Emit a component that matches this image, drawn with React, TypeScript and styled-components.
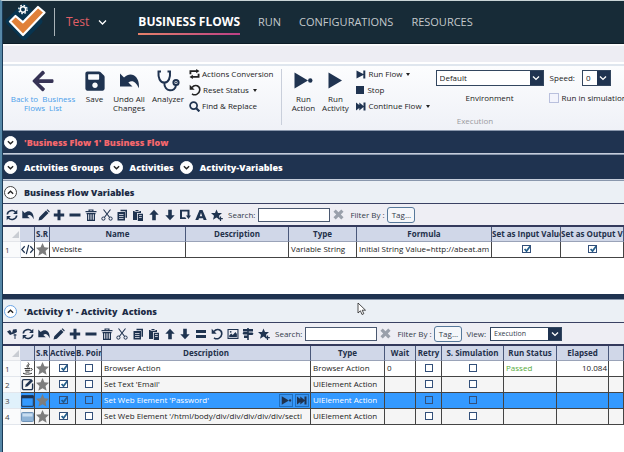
import React, { ReactNode } from "react";
import styled, { createGlobalStyle } from "styled-components";
import { FaArrowLeft, FaSave } from "react-icons/fa";

const navy = "#1f3350";
const check = (stroke: string) =>
  `url("data:image/svg+xml,%3Csvg xmlns='http://www.w3.org/2000/svg' viewBox='0 0 10 10'%3E%3Cpath d='M2 5l2.4 2.6L9.4 1' fill='none' stroke='${stroke}' stroke-width='2.2'/%3E%3C/svg%3E")`;

const Global = createGlobalStyle`
  * { box-sizing: border-box; }
  body {
    margin: 0;
    overflow: hidden;
    background: #fff;
    color: #222;
    font: 8px/10px "Open Sans", "Noto Sans", sans-serif;
  }
  button, input, select { font: inherit; color: inherit; margin: 0; padding: 0; }
  svg { display: block; flex: none; }
`;

const Window = styled.div`
  min-height: 100vh;
  border-left: 2px solid #5688a8;
  border-top: 1px solid #c9d4d6;
  overflow: hidden;
`;
const Inner = styled.div`
  min-height: 100vh;
  border-left: 1px solid #1b3a56;
`;

/* Header */
const Header = styled.header`
  display: flex;
  align-items: center;
  height: 43px;
  padding-left: 2px;
  background: #172b37;
  border-bottom: 1px solid #0c1c26;
`;
const Divider = styled.span`
  width: 1px;
  height: 28px;
  margin: 0 11px 0 8px;
  background: #a9b3b8;
`;
const Solution = styled.button`
  display: flex;
  align-items: center;
  gap: 9px;
  border: 0;
  background: none;
  color: #e05f66;
  font-size: 12px;
`;
const Nav = styled.nav`
  display: flex;
  gap: 18px;
  margin-left: 31px;
`;
const NavLink = styled.a<{ $active?: boolean }>`
  padding: 5px 0 4px;
  font-size: ${(p) => (p.$active ? 12 : 11)}px;
  line-height: 14px;
  text-decoration: none;
  white-space: nowrap;
  color: ${(p) => (p.$active ? "#fff" : "#c3c9cc")};
  font-weight: ${(p) => (p.$active ? 700 : 400)};
  border-bottom: 2px solid transparent;
  border-image: ${(p) => (p.$active ? "linear-gradient(90deg, #e5826a, #bb3f86) 1" : "none")};
`;

/* Ribbon */
const Band = styled.div`
  height: 17px;
  margin-top: 1px;
  background: #ededf3;
  border-top: 1px solid #f8f8fa;
`;
const Ribbon = styled.section`
  display: flex;
  height: 66px;
  margin-top: 2px;
  padding: 3px 0 0 4px;
  overflow: hidden;
  border-top: 2px solid #dfe6ee;
  background: linear-gradient(#fcfdfe, #eff1f7);
`;
const BigButton = styled.button<{ $w: number; $link?: boolean }>`
  display: flex;
  flex-direction: column;
  align-items: center;
  flex: none;
  width: ${(p) => p.$w}px;
  height: 46px;
  border: 0;
  background: none;
  color: ${(p) => (p.$link ? "#4ba0ea" : "#222")};
  line-height: 9px;
  white-space: pre;
`;
const BigIcon = styled.span`
  display: flex;
  align-items: center;
  height: 23px;
  margin-bottom: 2px;
  color: ${navy};
`;
const Commands = styled.div<{ $indent: number }>`
  display: flex;
  flex-direction: column;
  gap: 6px;
  flex: none;
  margin-left: ${(p) => p.$indent}px;
`;
const Command = styled.button<{ $gap?: number }>`
  display: flex;
  align-items: center;
  gap: ${(p) => p.$gap ?? 2}px;
  height: 10px;
  border: 0;
  background: none;
  white-space: nowrap;
`;
const Caret = styled.span`
  margin-left: 2px;
  border: 2px solid transparent;
  border-top: 3px solid #222;
  border-bottom: 0;
`;
const Group = styled.div`
  display: flex;
  flex-direction: column;
  justify-content: space-between;
  flex: none;
  width: 386px;
  height: 56px;
  margin-left: 8px;
  border-left: 1px solid #c9cfdb;
`;
const GroupBody = styled.div`
  display: flex;
  padding-left: 5px;
`;
const GroupCaption = styled.div`
  color: #9a9aa0;
  text-align: center;
  line-height: 9px;
`;
const Field = styled.label`
  display: flex;
  flex-direction: column;
  align-items: center;
  gap: 7px;
  margin: 1px 0 0 6px;
`;
const Side = styled.div`
  display: flex;
  flex-direction: column;
  gap: 7px;
  margin: 1px 0 0 5px;
`;
const Inline = styled.label<{ $gap: number; $indent?: number }>`
  display: flex;
  align-items: center;
  gap: ${(p) => p.$gap}px;
  margin-left: ${(p) => p.$indent ?? 0}px;
  white-space: nowrap;
`;
const SelectBox = styled.span<{ $w: number; $h: number }>`
  display: grid;
  width: ${(p) => p.$w}px;
  height: ${(p) => p.$h}px;
  border: 1px solid #33465f;
  background: #fff;
  > * { grid-area: 1 / 1; }
`;
const NativeSelect = styled.select<{ $small?: boolean }>`
  appearance: none;
  width: 100%;
  padding-left: 3px;
  border: 0;
  background: transparent;
  font-size: ${(p) => (p.$small ? 7 : 8)}px;
`;
const SelectArrow = styled.span`
  display: flex;
  align-items: center;
  justify-content: center;
  justify-self: end;
  width: 13px;
  background: ${navy};
  pointer-events: none;
`;

/* Expander headers */
const Bar = styled.div<{ $light?: boolean; $h?: number }>`
  display: flex;
  align-items: center;
  height: ${(p) => p.$h ?? 24}px;
  padding-left: 1px;
  border-top: 1px solid #8997ac;
  border-bottom: 1px solid ${(p) => (p.$light ? "#3a4163" : "#c5cddb")};
  background: ${(p) => (p.$light ? "#ebf0f5" : navy)};
  color: ${(p) => (p.$light ? "#1d2c45" : "#fff")};
`;
const Expander = styled.button<{ $ring?: string; $tone?: string }>`
  display: flex;
  align-items: center;
  gap: 7px;
  margin-right: 6px;
  border: 0;
  background: none;
  color: ${(p) => p.$tone ?? "inherit"};
  font-size: 9px;
  line-height: 13px;
  font-weight: 800;
  white-space: pre;
  > span {
    display: flex;
    align-items: center;
    justify-content: center;
    width: 13px;
    height: 13px;
    border: 1px solid ${(p) => p.$ring ?? "#fff"};
    border-radius: 50%;
    background: #fff;
    color: #222;
  }
`;

/* Grids */
const Toolbar = styled.div`
  display: flex;
  align-items: center;
  height: 23px;
  padding-left: 3px;
  background: #eeeef4;
  border-bottom: 2px solid #343a5c;
  color: #333b4a;
`;
const Tools = styled.div<{ $w: number }>`
  display: flex;
  justify-content: space-between;
  flex: none;
  width: ${(p) => p.$w}px;
  margin-right: 5px;
`;
const Tool = styled.button`
  border: 0;
  background: none;
  color: ${navy};
  svg { width: 12px; height: 12px; }
`;
const SearchInput = styled.input`
  width: 72px;
  height: 14px;
  border: 1px solid #4a5870;
  background: #fff;
`;
const ClearButton = styled.button`
  margin: 0 6px 0 3px;
  border: 0;
  background: none;
`;
const FilterText = styled.span`
  width: 37px;
  white-space: nowrap;
`;
const TagButton = styled.button`
  width: 28px;
  height: 16px;
  margin-right: 4px;
  border: 1px solid #56789a;
  border-radius: 3px;
  background: #f5f7fa;
`;
const Table = styled.table`
  width: 100%;
  table-layout: fixed;
  border-collapse: separate;
  border-spacing: 0;
`;
const Th = styled.th<{ $left?: boolean; $corner?: boolean }>`
  height: 15px;
  padding: 0;
  overflow: hidden;
  white-space: nowrap;
  font-weight: 700;
  color: #23304a;
  text-align: ${(p) => (p.$left ? "left" : "center")};
  background: ${(p) => (p.$corner ? "#f4f5f7" : "#d0d7e8")};
  border-right: 1px solid ${(p) => (p.$corner ? "#d0d7e8" : "#4a587a")};
  border-bottom: 1px solid ${(p) => (p.$corner ? "#e4e6ea" : "#9aa3b8")};
  svg { margin-left: auto; }
`;
const Td = styled.td<{ $align?: string; $tone?: string; $icon?: boolean }>`
  height: 16px;
  padding: ${(p) => (p.$icon ? "0" : "0 1px 1px 2px")};
  overflow: hidden;
  white-space: nowrap;
  vertical-align: middle;
  text-align: ${(p) => p.$align ?? "left"};
  color: ${(p) => p.$tone ?? "inherit"};
  border-right: 1px solid #444;
  border-bottom: 1px solid #444;
  svg { margin: 0 auto; }
`;
const RowHead = styled.th`
  padding: 0 0 0 2px;
  text-align: left;
  font-weight: 400;
  color: #444;
  background: #fafbfc;
  border-right: 1px solid #dce3ee;
  border-bottom: 1px solid #e2e6ec;
`;
const Row = styled.tr<{ $alt?: boolean; $selected?: boolean }>`
  background: ${(p) => (p.$selected ? "#3399ff" : p.$alt ? "#f5f5f5" : "#fff")};
  color: ${(p) => (p.$selected ? "#fff" : "#222")};
  ${RowHead} { background: ${(p) => (p.$selected ? "#e0f1fb" : "#fafbfc")}; }
`;
const Check = styled.input<{ $faint?: boolean; $dim?: boolean }>`
  appearance: none;
  display: block;
  flex: none;
  width: ${(p) => (p.$faint ? 10 : 8)}px;
  height: ${(p) => (p.$faint ? 10 : 8)}px;
  margin: 0 auto;
  border: 1px solid ${(p) => (p.$faint ? "#b9c0dd" : "#33507a")};
  background: ${(p) => (p.$faint ? "#f3f4fc" : p.$dim ? "transparent" : "#fff")};
  &:checked {
    background-image: ${(p) => (p.$dim ? check("%231d5c94") : check("%23245f8c"))};
    background-size: 10px 8px;
    background-origin: border-box;
    background-clip: border-box;
    background-repeat: no-repeat;
    width: 9px;
  }
`;
const DescCell = styled.div`
  display: flex;
  align-items: center;
  gap: 2px;
  > span { flex: 1; }
`;
const MiniButton = styled.button`
  width: 14px;
  height: 13px;
  border: 1px solid #1f6fc0;
  background: #3a93ee;
  color: ${navy};
`;
const Gap = styled.div`
  height: 36px;
`;
const Splitter = styled.div`
  height: 5px;
  background: ${navy};
`;
const Pointer = styled.svg`
  position: absolute;
  left: 357px;
  top: 302px;
`;

/* Icons */
const Svg = ({ children, w = 12, h = 12, vb = "0 0 12 12" }: { children: ReactNode; w?: number; h?: number; vb?: string }) => (
  <svg width={w} height={h} viewBox={vb} fill="currentColor" aria-hidden="true">{children}</svg>
);
const Chevron = ({ up, w = 7 }: { up?: boolean; w?: number }) => (
  <svg width={w} height={w} viewBox="0 0 8 8" fill="none" stroke="currentColor" strokeWidth="1.6" aria-hidden="true">
    <path d={up ? "M1 5.4 4 2.6l3 2.8" : "M1 2.6 4 5.4l3-2.8"} />
  </svg>
);
const undoPath = "M.3 1.500v7.800h7.500L5.300 6.900C7.500 5.300 9.700 6 11.600 10.300 12.400 3.200 7-.2 2.700 3.900z";
const icons: Record<string, ReactNode> = {
  pin: <Svg><path d="M1 3.500 4 2l2 3 1-3.500 3.500-.5L11 4 8.500 5.500 6 6.200 4 7z" /><path d="M9 6v5M7.500 7h3" stroke="currentColor" fill="none" /></Svg>,
  refresh: (
    <Svg>
      <path d="M1.300 5.500C1.700 1.500 7 .3 9.500 3M10.700 6.500C10.300 10.500 5 11.700 2.500 9" fill="none" stroke="currentColor" strokeWidth="1.600" />
      <path d="M11.300.7v4.200H7.100zM.7 11.300V7.100h4.200z" />
    </Svg>
  ),
  undo: <Svg><path d={undoPath} /></Svg>,
  edit: <Svg><path d="M.5 11.500l.8-3.300L8 1.500l2.500 2.500-6.700 6.700zM8.600.9l1-.7 2.200 2.200-.7 1z" /></Svg>,
  add: <Svg><path d="M4.500.8h3v3.700h3.700v3H7.500v3.700h-3V7.500H.8v-3h3.700z" /></Svg>,
  remove: <Svg><path d="M.5 4.500h11v3H.5z" /></Svg>,
  trash: <Svg><path d="M.5 2h3V.5h5V2h3v1.300H.5zM4.700 2h2.600v-.6H4.700zM1.500 4h9v1.200H10V12H2V5.200h-.5zM3.200 5.200v5.600h1V5.200zm2.300 0v5.600h1V5.200zm2.300 0v5.600h1V5.200z" fillRule="evenodd" /></Svg>,
  cut: (
    <Svg>
      <path d="M2.500.5 8.700 8.500M9.500.5 3.300 8.500" fill="none" stroke="currentColor" strokeWidth="1.100" />
      <circle cx="2.400" cy="9.600" r="1.600" fill="none" stroke="currentColor" /><circle cx="9.600" cy="9.600" r="1.600" fill="none" stroke="currentColor" />
    </Svg>
  ),
  copy: <Svg><path d="M4.500.8H11v8H9.500V2.300h-5z" /><path d="M1.500 3H9v8.500H1.500zM3 5v.8h4.500V5zm0 2v.8h4.500V7zm0 2v.8h4.500V9z" fillRule="evenodd" /></Svg>,
  paste: <Svg><path d="M1 2h2.500V1h3v1H9v2H5v7H1z" /><path d="M5.800 4.800H11V12H5.800zM7 6.300v.8h2.800v-.8zm0 2v.8h2.800v-.8z" fillRule="evenodd" /><path d="M2.500 2.500h5" stroke="#eeeef4" strokeWidth=".7" /></Svg>,
  up: <Svg><path d="M6 .8 10.700 5.700H7.800v5.500H4.200V5.700H1.300z" /></Svg>,
  down: <Svg><path d="M6 11.200 1.300 6.300h2.900V.8h3.600v5.500h2.900z" /></Svg>,
  copyTo: <Svg><path d="M1 .8h9.500v5.700H12L9.500 10 7 6.500h1.500V2.500H3v5.700h3.200l1.200 1.700H1z" /></Svg>,
  letter: <Svg><path d="M4.500 1h3L11.700 11H8.600L8 9.300H4L3.400 11H.3zM6 3.700 4.800 7.200h2.400z" fillRule="evenodd" /></Svg>,
  star: <Svg><path d="M5.500.5 7 4h4L8 6.700l1 4-3.500-2.200-3.500 2.200 1-4L0 4h4z" /><path d="M9.500 7.500v4.500M7.300 9.700h4.500" stroke="currentColor" strokeWidth="1.200" /></Svg>,
  equal: <Svg><path d="M1 2h10v3H1zM1 7h10v3H1z" /></Svg>,
  reset: <Svg><path d="M3 3.500C6-.3 11.300 2 10.700 6.300 10.200 10.300 6 12 3 9.800" fill="none" stroke="currentColor" strokeWidth="1.600" /><path d="M.7.700v5h5z" /></Svg>,
  image: <Svg><path d="M.5 1h11v10H.5zM1.600 2v8h8.800V2z" fillRule="evenodd" /><path d="M2.200 9.300V7.500l2-2 1.500 1.500L8.500 4l1.400 2v3.300z" /><circle cx="3.700" cy="3.800" r=".9" /></Svg>,
  signs: <Svg><path d="M5.200 0h1.600v1H11v2.500H6.800v1h3.700l1 1.200-1 1.300H6.800v5H5.200v-2H2V7.500h3.200v-1H1.500L.5 5.300 1.500 4h3.700v-.5H1V1h4.200z" /></Svg>,
};
const GreyStar = () => <Svg w={13} h={13}><path fill="#7d7d7d" d="M6 .1 7.800 4l4.200.4-3.200 2.900 1 4.400L6 9.400l-3.800 2.300 1-4.400L0 4.400 4.200 4z" /></Svg>;
const Corner = () => <svg width="9" height="9" viewBox="0 0 9 9"><path d="M8 1v7H1z" fill="#c9cdd3" /></svg>;
const Cross = () => <Svg w={11} h={11}><path d="M3 .5 6 3.500 9 .5 11.500 3l-3 3 3 3L9 11.500l-3-3-3 3L.5 9l3-3-3-3z" fill="#9aa0ab" /></Svg>;
const Repeat = () => (
  <Svg w={11} h={10}><path d="M0 6.200V1.500h8V0l4 2.500L8 5V3.500H2.200v2.700zM12 5.800v4.700H4V12L0 9.500 4 7v1.500h5.800V5.800z" /></Svg>
);
const Magnifier = () => (
  <svg width="11" height="11" viewBox="0 0 11 11" fill="none" stroke={navy}>
    <circle cx="4.600" cy="4.600" r="3.500" strokeWidth="1.700" /><path d="M7.200 7.200 10.400 10.400" strokeWidth="2.200" />
  </svg>
);
const Stethoscope = () => (
  <svg width="23" height="22" viewBox="0 0 23 22" fill="none" stroke={navy} strokeWidth="2">
    <path d="M4 1.500H1.500C1 8 3 12.500 7.300 12.500S13.500 8 13 1.500h-2.500M7.300 12.500C7 22.500 18.500 22.500 19 15" />
    <circle cx="19" cy="12.500" r="2.600" /><circle cx="19" cy="12.500" r=".6" strokeWidth="1" />
  </svg>
);

const typeIcons: Record<string, ReactNode> = {
  code: <svg width="13" height="11" viewBox="0 0 14 11" fill="none" stroke={navy} strokeWidth="1.300"><path d="M4 2 .8 5.500 4 9M10 2l3.200 3.500L10 9M8.300.5 5.700 10.500" /></svg>,
  java: <svg width="13" height="13" viewBox="0 0 13 13" fill="none" stroke="#333"><path d="M7 .5C9 2.500 4.500 3 6.500 5.500M8.500 2.500C6.500 3.500 7 4.500 8 5.500M3.500 6.500h6M4 8.300h5M4.500 10h4M10 6.500c2 0 1.500 2-.5 2.200M2 11.200c2 1.300 7 1.300 9 0" /></svg>,
  edit: <svg width="13" height="13" viewBox="0 0 14 14"><path d="M10.500 1.700H3A1.500 1.500 0 0 0 1.500 3.200V11A1.500 1.500 0 0 0 3 12.500h8a1.500 1.500 0 0 0 1.500-1.500V6" fill="none" stroke={navy} strokeWidth="1.500" /><path d="M4.500 9.700l.6-2.700L11 1.200l2 2L7.200 9z" fill={navy} /></svg>,
  browser: <svg width="13" height="12" viewBox="0 0 13 12" fill="none" stroke={navy}><path d="M.7.700h11.600v10.600H.7z" /><path d="M.5 2h12" strokeWidth="2.600" /></svg>,
  button: <svg width="13" height="10" viewBox="0 0 13 10"><rect x=".5" y=".5" width="12" height="9" rx="1" fill="#8fb3d6" stroke="#6f93b8" /><path d="M1.500 1.500h10v3h-10z" fill="#c9ddf0" /></svg>,
};
const Play = ({ dot }: { dot?: boolean }) => (
  <Svg w={dot ? 19 : 14} h={17} vb={dot ? "0 0 19 17" : "0 0 14 17"}>
    <path d="M.5.5 14 8.500.5 16.500z" />{dot && <circle cx="16.300" cy="8.500" r="2.200" />}
  </Svg>
);
const Next = ({ twice }: { twice?: boolean }) => (
  <svg width="10" height="9" viewBox="0 0 10 9" fill={navy} aria-hidden="true">
    <path d={twice ? "M0 .5 3.300 3V.5L7.500 4V.5h2v8h-2V5L3.300 8.500V6L0 8.500z" : "M.5.5 7.300 4V.5h2v8h-2V5L.5 8.500z"} />
  </svg>
);

const Logo = () => (
  <svg width="41" height="40" viewBox="0 0 41 40" aria-label="Ginger">
    <path d="M16.500 2.500Q19 .3 21.500 2.500L36.500 17.300Q38.500 19.500 36.500 21.700L21.500 37Q19 39.300 16.500 37L1.500 21.700Q-.5 19.500 1.500 17.300z" fill="#08344f" />
    <path d="M5 19.500 10.500 14 18 20.300 33 5 39.500 10.500 18 33z" fill="#e08038" stroke="#fff" strokeWidth="2.200" strokeLinejoin="round" />
    <circle cx="18" cy="7.500" r="2.700" fill="none" stroke="#fff" strokeWidth="1.500" />
    <circle cx="18" cy="7.500" r="4.200" fill="none" stroke="#fff" strokeWidth="1.300" strokeDasharray="1.600 1.700" />
  </svg>
);

const Select = ({ label, value, w, h, small }: { label: string; value: string; w: number; h: number; small?: boolean }) => (
  <SelectBox $w={w} $h={h}>
    <NativeSelect aria-label={label} $small={small} defaultValue={value}><option>{value}</option></NativeSelect>
    <SelectArrow><svg width="8" height="8" viewBox="0 0 8 8" fill="none" stroke="#fff" strokeWidth="1.400"><path d="M1 2.600 4 5.400l3-2.800" /></svg></SelectArrow>
  </SelectBox>
);

const GridToolbar = ({ tools, w, view }: { tools: string[]; w: number; view?: string }) => (
  <Toolbar>
    <Tools $w={w}>{tools.map((t) => <Tool key={t} aria-label={t}>{icons[t]}</Tool>)}</Tools>
    <Inline $gap={3}>Search:<SearchInput type="text" /></Inline>
    <ClearButton aria-label="Clear search"><Cross /></ClearButton>
    <FilterText>Filter By :</FilterText>
    <TagButton>Tag...</TagButton>
    {view && <Inline $gap={4}>View:<Select label="View" value={view} w={72} h={14} small /></Inline>}
  </Toolbar>
);

const Columns = ({ widths }: { widths: number[] }) => (
  <colgroup>{widths.map((w, i) => <col key={i} width={w} />)}<col /></colgroup>
);

const baseTools = ["refresh", "undo", "edit", "add", "remove", "trash", "cut", "copy", "paste", "up", "down"];

const actions = [
  { icon: "java", active: true, text: "Browser Action", type: "Browser Action", wait: "0", status: "Passed", elapsed: "10.084" },
  { icon: "edit", active: true, text: "Set Text 'Email'", type: "UIElement Action" },
  { icon: "browser", active: true, text: "Set Web Element 'Password'", type: "UIElement Action", selected: true },
  { icon: "button", active: true, text: "Set Web Element '/html/body/div/div/div/div/div/secti", type: "UIElement Action" },
];

export default function App() {
  return (
    <Window>
      <Global />
      <Inner>
        <Header>
          <Logo />
          <Divider />
          <Solution>Test<svg width="9" height="8" viewBox="0 0 8 8" fill="none" stroke="#fff" strokeWidth="1.300"><path d="M.5 2.500 4 6l3.500-3.500" /></svg></Solution>
          <Nav>
            <NavLink href="#flows" $active>BUSINESS FLOWS</NavLink>
            <NavLink href="#run">RUN</NavLink>
            <NavLink href="#config">CONFIGURATIONS</NavLink>
            <NavLink href="#resources">RESOURCES</NavLink>
          </Nav>
        </Header>
        <Band />
        <Ribbon>
          <BigButton $w={72} $link><BigIcon><FaArrowLeft size={24} color="#363355" /></BigIcon>{"Back to  Business\nFlows  List"}</BigButton>
          <BigButton $w={31}><BigIcon><FaSave size={22} /></BigIcon>Save</BigButton>
          <BigButton $w={38}><BigIcon><Svg w={23} h={20}><path d={undoPath} /></Svg></BigIcon>{"Undo All\nChanges"}</BigButton>
          <BigButton $w={40}><BigIcon><Stethoscope /></BigIcon>Analyzer</BigButton>
          <Commands $indent={1}>
            <Command><Repeat />Actions Conversion</Command>
            <Command>{icons.reset}Reset Status<Caret /></Command>
            <Command><Magnifier />Find &amp; Replace</Command>
          </Commands>
          <Group>
            <GroupBody>
              <BigButton $w={32}><BigIcon><Play dot /></BigIcon>{"Run\nAction"}</BigButton>
              <BigButton $w={32}><BigIcon><Play /></BigIcon>{"Run\nActivity"}</BigButton>
              <Commands $indent={5}>
                <Command><Next />Run Flow<Caret /></Command>
                <Command $gap={3}><Svg w={8} h={8}><path d="M0 0h12v12H0z" fill={navy} /></Svg>Stop</Command>
                <Command><Next twice />Continue Flow<Caret /></Command>
              </Commands>
              <Field><Select label="Environment" value="Default" w={108} h={16} />Environment</Field>
              <Side>
                <Inline $gap={7} $indent={1}>Speed:<Select label="Speed" value="0" w={29} h={16} /></Inline>
                <Inline $gap={3}><Check type="checkbox" $faint />Run in simulation mode</Inline>
              </Side>
            </GroupBody>
            <GroupCaption>Execution</GroupCaption>
          </Group>
        </Ribbon>

        <Bar><Expander $tone="#f4676c"><span><Chevron /></span>'Business Flow 1' Business Flow</Expander></Bar>
        <Bar $h={26}>
          <Expander><span><Chevron /></span>Activities Groups</Expander>
          <Expander><span><Chevron /></span>Activities</Expander>
          <Expander><span><Chevron /></span>Activity-Variables</Expander>
        </Bar>
        <Bar $light><Expander $ring="#444"><span><Chevron up /></span>Business Flow Variables</Expander></Bar>

        <GridToolbar tools={[...baseTools, "copyTo", "letter", "star"]} w={217} />
        <Table>
          <Columns widths={[18, 14, 15, 136, 103, 68, 135, 69]} />
          <thead>
            <tr>
              <Th $corner><Corner /></Th><Th /><Th>S.R</Th><Th>Name</Th><Th>Description</Th><Th>Type</Th><Th>Formula</Th>
              <Th $left>Set as Input Value</Th><Th $left>Set as Output Value</Th>
            </tr>
          </thead>
          <tbody>
            <Row>
              <RowHead>1</RowHead><Td $icon>{typeIcons.code}</Td><Td $icon><GreyStar /></Td><Td>Website</Td><Td /><Td>Variable String</Td>
              <Td>Initial String Value=http://abeat.am</Td>
              <Td><Check type="checkbox" aria-label="Set as input value" defaultChecked /></Td>
              <Td><Check type="checkbox" aria-label="Set as output value" defaultChecked /></Td>
            </Row>
          </tbody>
        </Table>
        <Gap />
        <Splitter />
        <Bar $light><Expander $ring="#6aa5e6"><span><Chevron up /></span>{"'Activity 1' - Activity  Actions"}</Expander></Bar>

        <GridToolbar tools={["pin", ...baseTools, "equal", "reset", "image", "signs", "star"]} w={264} view="Execution" />
        <Table>
          <Columns widths={[18, 14, 15, 26, 26, 209, 74, 31, 26, 62, 53, 52]} />
          <thead>
            <tr>
              <Th $corner><Corner /></Th><Th /><Th>S.R</Th><Th>Active</Th><Th $left>B. Point</Th><Th>Description</Th><Th>Type</Th>
              <Th>Wait</Th><Th>Retry</Th><Th>S. Simulation</Th><Th>Run Status</Th><Th>Elapsed</Th><Th />
            </tr>
          </thead>
          <tbody>
            {actions.map((a, i) => (
              <Row key={i} $alt={i % 2 === 1} $selected={a.selected}>
                <RowHead>{i + 1}</RowHead>
                <Td $icon>{typeIcons[a.icon]}</Td>
                <Td $icon><GreyStar /></Td>
                <Td><Check type="checkbox" aria-label="Active" $dim={a.selected} defaultChecked={a.active} /></Td>
                <Td><Check type="checkbox" aria-label="Break point" $dim={a.selected} /></Td>
                <Td>
                  <DescCell>
                    <span>{a.text}</span>
                    {a.selected && (
                      <>
                        <MiniButton aria-label="Run action"><Svg w={11} h={9} vb="0 0 19 17"><path d="M.5.5 14 8.500.5 16.500z" /><circle cx="16.300" cy="8.500" r="2.200" /></Svg></MiniButton>
                        <MiniButton aria-label="Continue"><Next twice /></MiniButton>
                      </>
                    )}
                  </DescCell>
                </Td>
                <Td>{a.type}</Td>
                <Td>{a.wait}</Td>
                <Td><Check type="checkbox" aria-label="Retry" $dim={a.selected} /></Td>
                <Td><Check type="checkbox" aria-label="Simulation" $dim={a.selected} /></Td>
                <Td $tone="#57ab3c">{a.status}</Td>
                <Td $align="right">{a.elapsed}</Td>
                <Td />
              </Row>
            ))}
          </tbody>
        </Table>
      </Inner>
      <Pointer width="10" height="14" viewBox="0 0 10 14" aria-hidden="true">
        <path d="M1 1v10l2.400-2.200L5 12.500l1.800-.8-1.600-3.500H8.500z" fill="#fff" stroke="#222" strokeWidth=".8" />
      </Pointer>
    </Window>
  );
}
